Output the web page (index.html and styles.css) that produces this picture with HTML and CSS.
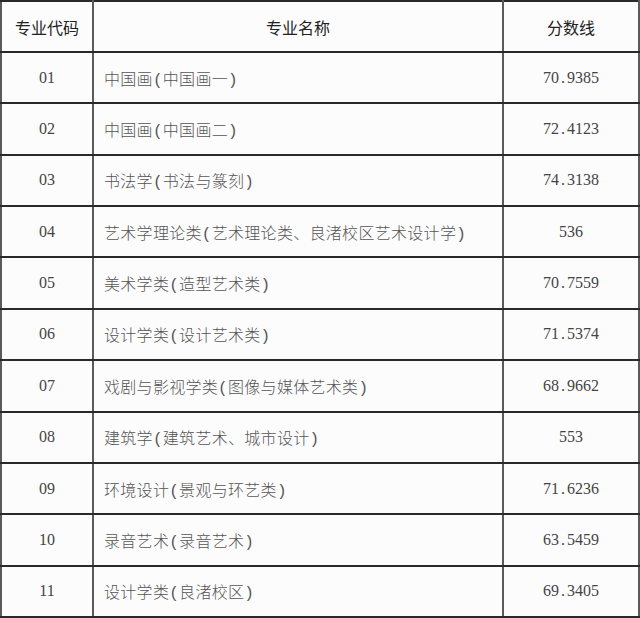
FILE: index.html
```html
<!DOCTYPE html>
<html lang="zh-CN">
<head>
<meta charset="utf-8">
<link rel="stylesheet" href="styles.css">
</head>
<body>
<table class="score-table">
  <colgroup>
    <col class="c-code">
    <col class="c-name">
    <col class="c-score">
  </colgroup>
  <thead>
    <tr><th>专业代码</th><th>专业名称</th><th>分数线</th></tr>
  </thead>
  <tbody>
    <tr><td class="code">01</td><td class="name">中国画(中国画一)</td><td class="score">70<span class="dot">.</span>9385</td></tr>
    <tr><td class="code">02</td><td class="name">中国画(中国画二)</td><td class="score">72<span class="dot">.</span>4123</td></tr>
    <tr><td class="code">03</td><td class="name">书法学(书法与篆刻)</td><td class="score">74<span class="dot">.</span>3138</td></tr>
    <tr><td class="code">04</td><td class="name">艺术学理论类(艺术理论类、良渚校区艺术设计学)</td><td class="score">536</td></tr>
    <tr><td class="code">05</td><td class="name">美术学类(造型艺术类)</td><td class="score">70<span class="dot">.</span>7559</td></tr>
    <tr><td class="code">06</td><td class="name">设计学类(设计艺术类)</td><td class="score">71<span class="dot">.</span>5374</td></tr>
    <tr><td class="code">07</td><td class="name">戏剧与影视学类(图像与媒体艺术类)</td><td class="score">68<span class="dot">.</span>9662</td></tr>
    <tr><td class="code">08</td><td class="name">建筑学(建筑艺术、城市设计)</td><td class="score">553</td></tr>
    <tr><td class="code">09</td><td class="name">环境设计(景观与环艺类)</td><td class="score">71<span class="dot">.</span>6236</td></tr>
    <tr><td class="code">10</td><td class="name">录音艺术(录音艺术)</td><td class="score">63<span class="dot">.</span>5459</td></tr>
    <tr><td class="code">11</td><td class="name">设计学类(良渚校区)</td><td class="score">69<span class="dot">.</span>3405</td></tr>
  </tbody>
</table>
</body>
</html>
```
FILE: styles.css
```css
html, body {
  margin: 0;
  padding: 0;
  background: #fdfcfd;
}

.score-table {
  border-collapse: collapse;
  table-layout: fixed;
  width: 638px;
  height: 618px;
  font-family: "Liberation Mono", "Noto Sans CJK SC", sans-serif;
  font-size: 16px;
  color: #4a4a4a;
}

.c-code { width: 92px; }
.c-name { width: 410px; }
.c-score { width: 136px; }

.score-table th,
.score-table td {
  border-top: 2px solid #2a2a2a;
  border-bottom: 2px solid #2a2a2a;
  border-left: 2px solid #5a5a5a;
  border-right: 2px solid #5a5a5a;
  padding: 0;
  height: 49px;
  vertical-align: middle;
}

.score-table th {
  font-family: "Noto Sans CJK SC", sans-serif;
  font-weight: 400;
  color: #222;
  text-align: center;
}

.score-table td.code,
.score-table td.score {
  font-family: "Liberation Serif", "Noto Sans CJK SC", serif;
  text-align: center;
  color: #444;
}

.score-table td.name {
  text-align: left;
  padding-left: 10px;
  font-weight: 300;
  color: #555;
  letter-spacing: 0.3px;
}

.dot {
  display: inline-block;
  width: 8px;
}
```
